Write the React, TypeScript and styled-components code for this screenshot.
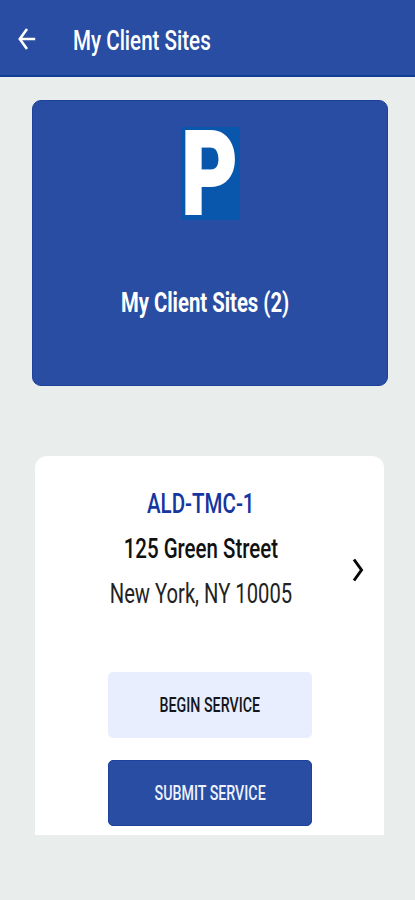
import React from "react";
import styled, { createGlobalStyle } from "styled-components";

const GlobalStyle = createGlobalStyle`
  *, *::before, *::after { box-sizing: border-box; }
  html, body { margin: 0; background: #e9edec; }
  body { font-family: Roboto, "Noto Sans", sans-serif; }
`;

const Screen = styled.div`
  width: 415px;
  height: 900px;
  overflow: hidden;
  background: #e9edec;
  display: flex;
  flex-direction: column;
`;

const AppBar = styled.header`
  height: 77px;
  flex: none;
  display: flex;
  align-items: center;
  padding: 4px 0 0 17px;
  background: #284da2;
  border-bottom: 2px solid #123c98;
`;

const BackButton = styled.button`
  width: 56px;
  height: 28px;
  margin-bottom: 2px;
  padding: 0;
  border: 0;
  background: none;
  display: flex;
  align-items: center;
`;

const Text = styled.span<{
  $size: number;
  $scale: number;
  $weight?: number;
  $color?: string;
}>`
  display: block;
  margin: 0;
  white-space: nowrap;
  font-size: ${(p) => p.$size}px;
  line-height: 32px;
  font-weight: ${(p) => p.$weight ?? 500};
  color: ${(p) => p.$color ?? "#fff"};
  transform: scaleX(${(p) => p.$scale});
`;

const PageTitle = styled(Text)`
  margin-top: 3px;
  transform-origin: left center;
`;

const SummaryCard = styled.section`
  width: 356px;
  height: 286px;
  flex: none;
  margin: 23px 0 0 32px;
  padding: 26px 0 0;
  border-radius: 9px;
  background: #284da2;
  border: 1px solid #1b419c;
  display: flex;
  flex-direction: column;
  align-items: center;
  gap: 66px;
`;

const ParkingSign = styled.svg`
  display: block;
  width: 60px;
  height: 94px;
  flex: none;
  overflow: visible;
`;

const SummaryTitle = styled.div`
  display: flex;
  justify-content: center;
  width: 100%;
  padding-right: 9px;
`;

const SiteCard = styled.section`
  width: 349px;
  height: 379px;
  flex: none;
  margin: 70px 0 0 35px;
  padding-top: 32px;
  border-radius: 12px 12px 0 0;
  background: #fff;
`;

const SiteRow = styled.div`
  display: grid;
  grid-template-columns: 315px 34px;
`;

const SiteDetails = styled.div`
  height: 184px;
  display: flex;
  flex-direction: column;
  align-items: center;
  gap: 13px;
  padding-left: 16px;
`;

const Chevron = styled.svg`
  display: block;
  width: 16px;
  height: 28px;
  margin-top: 68px;
`;

const Actions = styled.div`
  display: flex;
  flex-direction: column;
  gap: 22px;
  padding-left: 73px;
`;

const ActionButton = styled.button<{ $primary?: boolean }>`
  width: 204px;
  height: 66px;
  padding: 2px 0 0;
  border: 1px solid ${(p) => (p.$primary ? "#1b419c" : "#e8eefe")};
  border-radius: 5px;
  background: ${(p) => (p.$primary ? "#284da2" : "#e8eefe")};
  font-family: inherit;
  display: flex;
  align-items: center;
  justify-content: center;
`;

export default function App() {
  return (
    <>
      <GlobalStyle />
      <Screen>
        <AppBar>
          <BackButton aria-label="Back">
            <svg width="20" height="24" viewBox="0 0 20 24" fill="none" stroke="#fff" strokeWidth="2.6">
              <path d="M10 2 2.8 12 10 22M2.8 12H18.2" />
            </svg>
          </BackButton>
          <PageTitle as="h1" $size={28} $scale={0.735}>
            My Client Sites
          </PageTitle>
        </AppBar>

        <SummaryCard>
          <ParkingSign viewBox="0 0 60 94" role="img" aria-label="Parking">
            <rect x="1.5" width="58.5" height="93" fill="#0857ac" />
            <text
              transform="translate(1.6 86.8) scale(0.74 1)"
              fontFamily="Roboto"
              fontWeight="900"
              fontSize="116"
              fill="#fff"
              stroke="#fff"
              strokeWidth="2"
            >
              P
            </text>
          </ParkingSign>
          <SummaryTitle>
            <Text $size={27.5} $scale={0.738} $weight={700}>My Client Sites (2)</Text>
          </SummaryTitle>
        </SummaryCard>

        <SiteCard>
          <SiteRow>
            <SiteDetails>
              <Text $size={27} $scale={0.76} $weight={500} $color="#1536a0">ALD-TMC-1</Text>
              <Text $size={27} $scale={0.758} $weight={500} $color="#111">125 Green Street</Text>
              <Text $size={27} $scale={0.748} $weight={400} $color="#222">New York, NY 10005</Text>
            </SiteDetails>
            <Chevron viewBox="0 0 16 28" fill="none" stroke="#080808" strokeWidth="3">
              <path d="M4 3.5 11.5 14 4 24.5" />
            </Chevron>
          </SiteRow>
          <Actions>
            <ActionButton>
              <Text $size={19.5} $scale={0.73} $color="#14161c">BEGIN SERVICE</Text>
            </ActionButton>
            <ActionButton $primary>
              <Text $size={19.5} $scale={0.73} $color="#eef1fc">SUBMIT SERVICE</Text>
            </ActionButton>
          </Actions>
        </SiteCard>
      </Screen>
    </>
  );
}
